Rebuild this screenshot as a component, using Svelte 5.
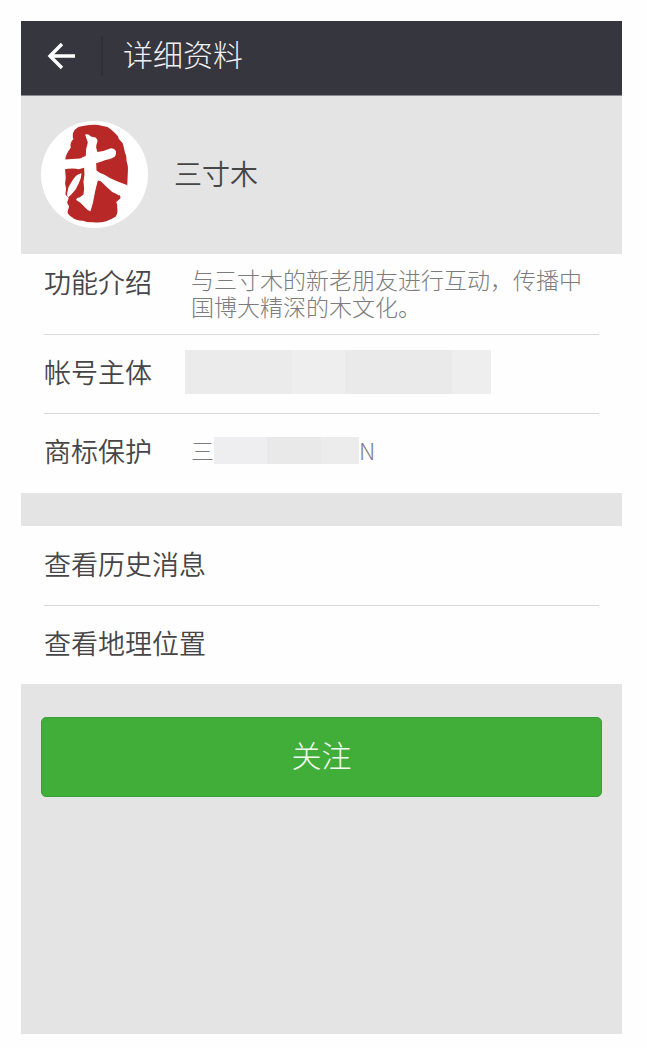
<script lang="ts">
	type Block = { width: number; color: string };

	interface InfoRow {
		label: string;
		text?: string;
		tail?: string;
		tall?: boolean;
		blocks?: Block[];
	}

	const account = {
		name: '三寸木'
	};

	const rows: InfoRow[] = [
		{
			label: '功能介绍',
			text: '与三寸木的新老朋友进行互动，传播中国博大精深的木文化。'
		},
		{
			label: '帐号主体',
			tall: true,
			blocks: [
				{ width: 107, color: '#ebebeb' },
				{ width: 53, color: '#eeeeee' },
				{ width: 107, color: '#eaeaea' },
				{ width: 39, color: '#eeeeef' }
			]
		},
		{
			label: '商标保护',
			text: '三',
			tail: 'N',
			blocks: [
				{ width: 53, color: '#eeeef0' },
				{ width: 54, color: '#e9e9e9' },
				{ width: 38, color: '#ececec' }
			]
		}
	];

	const links = ['查看历史消息', '查看地理位置'];
</script>

<div class="page">
	<header class="topbar">
		<button class="back" type="button" aria-label="返回">
			<svg viewBox="0 0 28 28" width="28" height="28">
				<path d="M15 2 L3 14 L15 26 M4 14 H28" fill="none" stroke="#fff" stroke-width="3.4" />
			</svg>
		</button>
		<h1>详细资料</h1>
	</header>

	<section class="profile">
		<!-- 印章头像 -->
		<svg class="avatar" viewBox="33 34 320 320" aria-hidden="true">
			<circle cx="193" cy="194" r="160" fill="#fff" />
			<path
				fill="#b82827"
				d="M134 60 Q144 50 158 49 L178 46 Q200 43 214 48 L232 52 Q244 60 254 70 Q264 78 266 88 Q278 98 280 110 L284 128 Q290 138 289 154 Q294 168 293 180 L291 226 L289 240 L264 252 Q273 258 270 266 L258 276 Q262 284 261 294 Q264 308 256 320 Q242 328 228 334 Q210 339 190 337 Q172 338 158 332 Q136 332 126 322 Q110 312 113 304 L117 290 L111 278 L116 264 L106 254 L108 236 L105 222 L107 204 L105 178 L106 146 Q108 132 122 114 Q118 100 130 88 Q124 74 134 60 Z"
			/>
			<!-- 木 -->
			<path
				fill="#fff"
				d="M165 74 Q176 72 182 80 L196 83 Q203 88 202 95 Q198 104 198 114 L202 127 Q222 124 240 116 Q252 114 257 124 Q259 136 252 142 Q240 149 226 151 Q212 157 198 160 L199 182 Q208 190 220 193 L242 206 L264 216 L292 226 L292 242 Q278 246 266 257 Q256 250 246 246 L228 230 L212 214 L203 212 L199 228 L195 244 L188 280 L181 304 Q170 300 164 292 L150 278 L138 270 Q140 262 148 263 L160 254 L162 236 L160 216 L163 194 L162 174 L146 178 Q124 174 98 180 L96 150 L126 148 L150 146 L167 138 L168 118 L173 98 Z"
			/>
			<path
				fill="#fff"
				d="M154 190 Q154 206 146 220 L137 238 Q126 252 115 262 Q109 258 112 246 Q113 232 121 222 Q128 208 138 198 Q144 192 154 190 Z"
			/>
		</svg>
		<h2>{account.name}</h2>
	</section>

	<dl class="group">
		{#each rows as row (row.label)}
			<div class="row">
				<dt>{row.label}</dt>
				<dd class:hidden-value={row.tall}>
					{#if row.text}<span>{row.text}</span>{/if}
					{#if row.blocks}
						<span class="mosaic" class:tall={row.tall}>
							{#each row.blocks as block}
								<i style="width: {block.width}px; background: {block.color}"></i>
							{/each}
						</span>
					{/if}
					{#if row.tail}<span>{row.tail}</span>{/if}
				</dd>
			</div>
		{/each}
	</dl>

	<nav class="group links">
		{#each links as link}
			<a class="row" href="#top">{link}</a>
		{/each}
	</nav>

	<div class="action">
		<button class="follow" type="button">关注</button>
	</div>
</div>

<style>
	:global(body) {
		margin: 0;
		background: #fefefe;
	}

	.page {
		box-sizing: border-box;
		display: flex;
		flex-direction: column;
		min-height: calc(100vh - 35px);
		margin: 21px 25px 14px 21px;
		background: #e4e4e4;
		color: #464648;
		font-family: 'Noto Sans CJK SC', sans-serif;
		font-weight: 350;
	}

	/* 顶部栏 */
	.topbar {
		box-sizing: border-box;
		display: flex;
		align-items: center;
		height: 75px;
		padding-bottom: 4px;
		background: #36363e;
		border-bottom: 1px solid #8a8a8e;
	}

	.back {
		display: flex;
		align-items: center;
		height: 40px;
		padding: 0 26px;
		border: 0;
		border-right: 2px solid #2f2f36;
		background: none;
		cursor: pointer;
	}

	h1 {
		margin: 0 0 6px 20px;
		color: #f0f0f4;
		font-size: 30px;
		font-weight: 300;
		line-height: 40px;
	}

	.profile {
		display: flex;
		align-items: center;
		gap: 26px;
		padding: 25px 20px 26px;
	}

	.avatar {
		flex: none;
		width: 107px;
		height: 107px;
	}

	h2 {
		margin: 0;
		padding-bottom: 4px;
		font-size: 28px;
		font-weight: 350;
		line-height: 40px;
	}

	/* 资料列表 */
	.group {
		margin: 0;
		padding: 0 23px;
		background: #fefefe;
	}

	.row {
		box-sizing: border-box;
		display: flex;
		align-items: center;
		min-height: 79px;
		padding-bottom: 4px;
		font-size: 27px;
		line-height: 32px;
	}

	.row + .row {
		border-top: 1px solid #d9d9d9;
	}

	dl .row:first-child {
		align-items: flex-start;
		min-height: 80px;
		padding-top: 12px;
	}

	dt {
		flex: none;
		width: 147px;
	}

	dd {
		display: flex;
		align-items: center;
		flex: 1;
		margin: 0;
		color: #7c7c7e;
		font-size: 23px;
		font-weight: 300;
		line-height: 27px;
	}

	dl .row:last-child {
		min-height: 80px;
		padding-bottom: 6px;
	}

	.hidden-value {
		margin-left: -6px;
	}

	.mosaic {
		display: flex;
		height: 27px;
	}

	.mosaic.tall {
		height: 44px;
	}

	.links {
		margin-top: 33px;
	}

	a.row {
		color: inherit;
		text-decoration: none;
	}

	.action {
		padding: 33px 20px;
	}

	.follow {
		width: 100%;
		height: 80px;
		padding: 0 0 6px;
		border: 1px solid #38a038;
		border-radius: 5px;
		background: #41ae3a;
		color: #f4fbf2;
		font-family: inherit;
		font-size: 30px;
		font-weight: 300;
		cursor: pointer;
	}
</style>
